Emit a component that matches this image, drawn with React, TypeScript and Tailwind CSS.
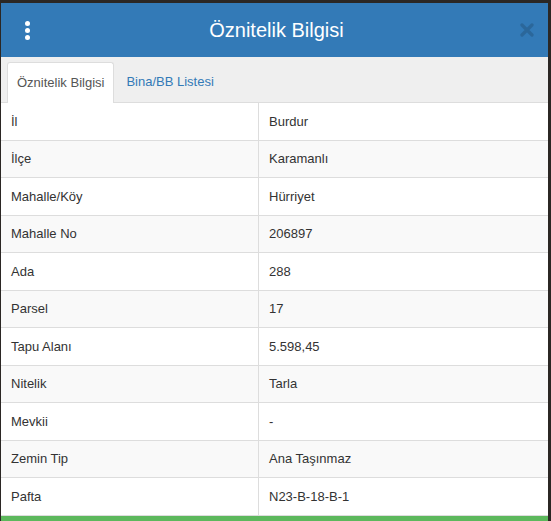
import React from "react";

const rows: [string, string][] = [
  ["İl", "Burdur"],
  ["İlçe", "Karamanlı"],
  ["Mahalle/Köy", "Hürriyet"],
  ["Mahalle No", "206897"],
  ["Ada", "288"],
  ["Parsel", "17"],
  ["Tapu Alanı", "5.598,45"],
  ["Nitelik", "Tarla"],
  ["Mevkii", "-"],
  ["Zemin Tip", "Ana Taşınmaz"],
  ["Pafta", "N23-B-18-B-1"],
];

export default function App() {
  return (
    <div
      className="w-[551px] h-[521px] overflow-hidden bg-[#2b2724] pt-[3px] pl-[1px] pr-[3px]"
      style={{ fontFamily: '"Liberation Sans", Arial, sans-serif' }}
    >
      <div className="flex flex-col bg-white h-full">
        {/* Header */}
        <div className="h-[54px] bg-[#337ab7] flex items-center relative">
          <div className="w-[52px] flex flex-col items-center gap-[2px] pt-[1px]">
            <span className="block w-[5px] h-[5px] rounded-full bg-white" />
            <span className="block w-[5px] h-[5px] rounded-full bg-white" />
            <span className="block w-[5px] h-[5px] rounded-full bg-white" />
          </div>
          <div className="flex-1 text-center text-white text-[20px] pr-[6px]">
            Öznitelik Bilgisi
          </div>
          <div className="w-[42px] flex items-center justify-center">
            <svg width="14" height="14" viewBox="0 0 14 14">
              <path
                d="M2 2 L12 12 M12 2 L2 12"
                stroke="#2a6496"
                strokeWidth="3.2"
                strokeLinecap="round"
                opacity="0.85"
              />
            </svg>
          </div>
        </div>

        {/* Tabs */}
        <div className="h-[46px] bg-[#efefef] flex items-end pl-[6px] border-b border-[#dddddd]">
          <div className="h-[41px] px-[9px] bg-white border border-b-0 border-[#dddddd] rounded-t-[3px] flex items-center text-[13px] text-[#555] -mb-px">
            Öznitelik Bilgisi
          </div>
          <div className="h-[41px] px-[12px] flex items-center text-[13px] text-[#337ab7]">
            Bina/BB Listesi
          </div>
        </div>

        {/* Attribute table */}
        <div className="flex-1 flex flex-col">
          {rows.map(([label, value], i) => (
            <div
              key={label}
              className={`h-[37.5px] flex border-b border-[#dddddd] text-[13px] text-[#333] ${
                i % 2 === 1 ? "bg-[#f9f9f9]" : "bg-white"
              }`}
            >
              <div className="w-[258px] border-r border-[#dddddd] flex items-center pl-[10px]">
                {label}
              </div>
              <div className="flex-1 flex items-center pl-[10px]">{value}</div>
            </div>
          ))}
          <div className="flex-1 bg-[#5cb85c]" />
        </div>
      </div>
    </div>
  );
}
